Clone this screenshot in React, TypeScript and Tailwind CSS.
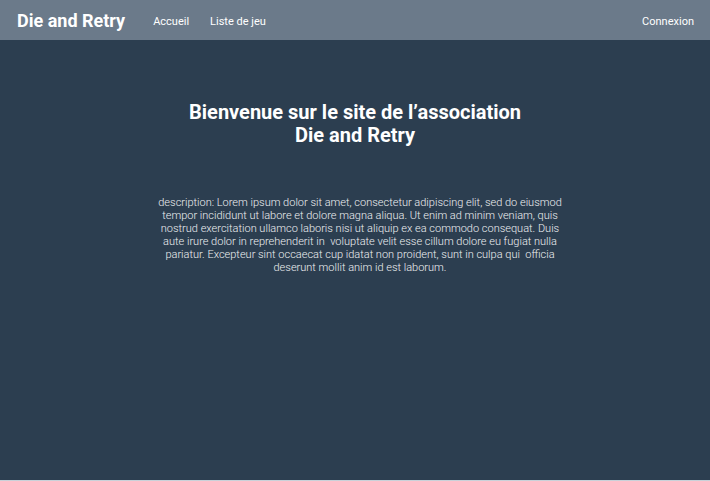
export default function App() {
  return (
    <div className="flex min-h-[481px] flex-col bg-[#c9d1d9] font-['Roboto',sans-serif] text-white">
      <header className="flex h-10 items-center bg-[#6b7a8a] px-4">
        <span className="pl-[1px] text-[18px] font-bold">Die and Retry</span>
        <nav className="mt-[5px] ml-7 flex gap-[21px] text-[11px]">
          <a>Accueil</a>
          <a>Liste de jeu</a>
        </nav>
        <a className="mt-[5px] ml-auto text-[11px]">Connexion</a>
      </header>
      <main className="flex h-[440px] flex-col items-center bg-[#2c3e50] pt-[61px]">
        <h1 className="text-center text-[20px] leading-[23px] font-bold">
          Bienvenue sur le site de l’association
          <br />
          Die and Retry
        </h1>
        <p className="mt-[49px] pl-[10px] text-center text-[11px] leading-[13px] font-light whitespace-pre text-[#eef0f2]">
          {`description: Lorem ipsum dolor sit amet, consectetur adipiscing elit, sed do eiusmod
tempor incididunt ut labore et dolore magna aliqua. Ut enim ad minim veniam, quis
nostrud exercitation ullamco laboris nisi ut aliquip ex ea commodo consequat. Duis
aute irure dolor in reprehenderit in  voluptate velit esse cillum dolore eu fugiat nulla
pariatur. Excepteur sint occaecat cup idatat non proident, sunt in culpa qui  officia
deserunt mollit anim id est laborum.`}
        </p>
      </main>
    </div>
  );
}
